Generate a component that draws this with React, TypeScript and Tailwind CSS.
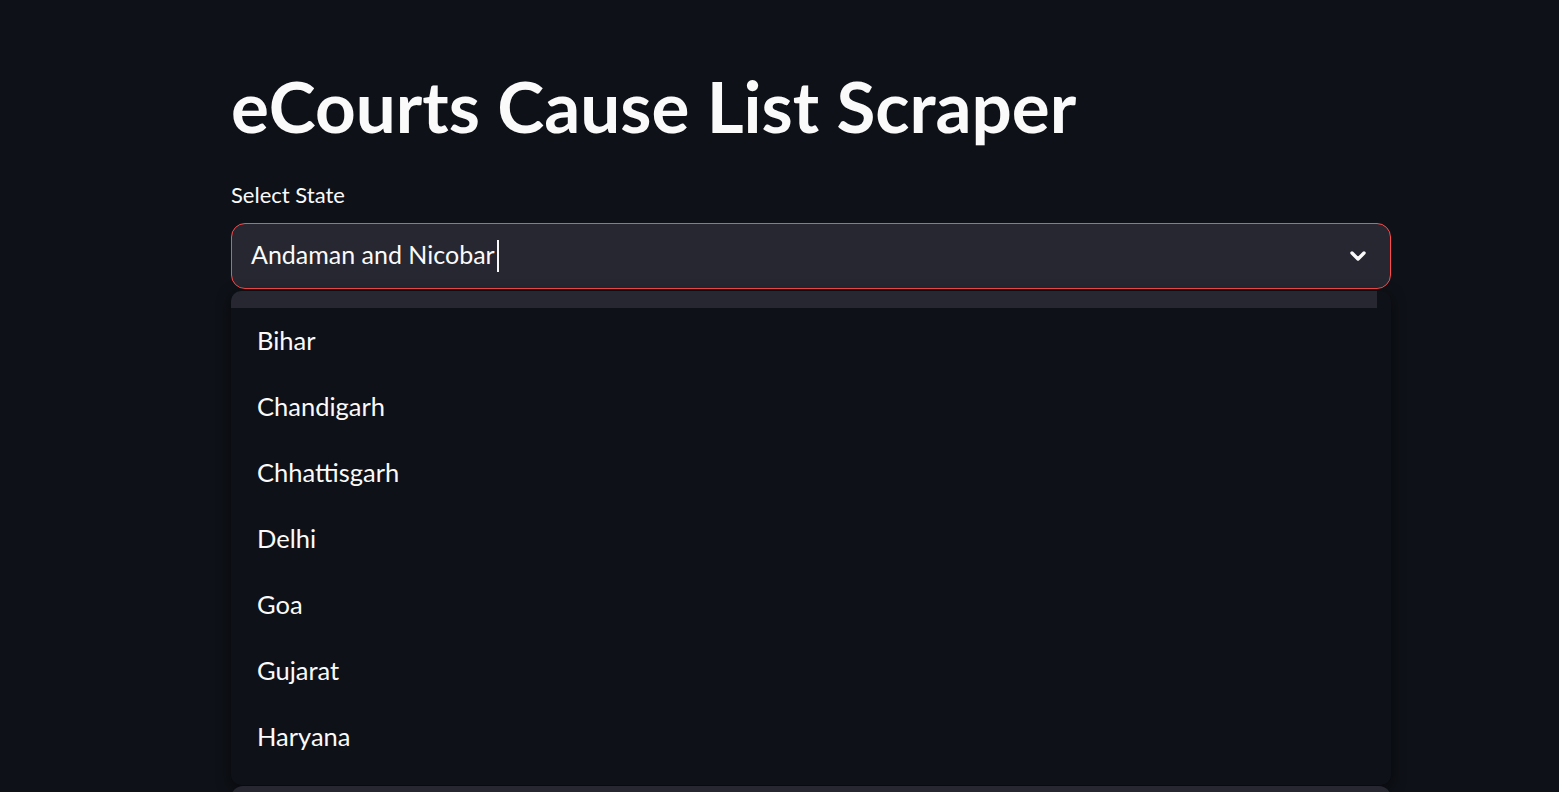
import React from "react";

const items = ["Bihar", "Chandigarh", "Chhattisgarh", "Delhi", "Goa", "Gujarat", "Haryana"];

export default function App() {
  return (
    <div
      className="h-[792px] w-full overflow-hidden bg-[#0e1117] text-[#fafafa]"
      style={{ fontFamily: "Lato, 'Noto Sans', sans-serif" }}
    >
      <div className="ml-[231px] w-[1160px] pt-[64px]">
        <h1 className="text-[71px] font-bold leading-[84px]">eCourts Cause List Scraper</h1>
        <div className="mt-[32px] text-[22px] leading-[29px]">Select State</div>
        <div className="relative mt-[14px]">
          <div className="flex h-[66px] items-center rounded-[14px] border border-[#ff4b4b] bg-[#262730] pl-[19px] pr-[20px]">
            <span className="pb-[5px] text-[25px] leading-[32px]">Andaman and Nicobar</span>
            <span className="ml-[2px] h-[32px] w-[2px] bg-[#fafafa]" />
            <div className="flex-1" />
            <svg width="24" height="24" viewBox="0 0 24 24" fill="none" stroke="#fafafa" strokeWidth="3.4" strokeLinecap="round" strokeLinejoin="round">
              <path d="M6 9l6 6 6-6" />
            </svg>
          </div>
          <div className="mt-[2px] h-[494px] overflow-hidden rounded-[10px] bg-[#0f1118] shadow-[0_4px_14px_rgba(0,0,0,0.55)]">
            <div className="mr-[14px]">
              <div className="h-[17px] bg-[#262730]" />
              {items.map((s) => (
                <div key={s} className="flex h-[66px] items-center pb-[2px] pl-[26px] text-[25.5px]">
                  {s}
                </div>
              ))}
            </div>
          </div>
          <div className="mt-[1px] h-[20px] rounded-t-[12px] bg-[#262730]" />
        </div>
      </div>
    </div>
  );
}
